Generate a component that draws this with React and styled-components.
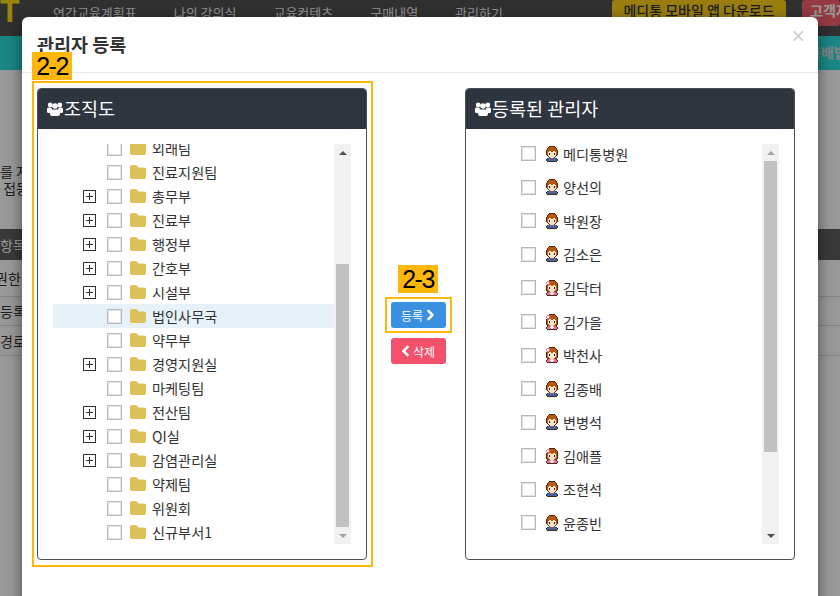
import React from 'react'
import styled, { createGlobalStyle } from 'styled-components'
import { FaChevronLeft, FaChevronRight } from 'react-icons/fa'

const GlobalStyle = createGlobalStyle`
    html, body {
        margin: 0;
        padding: 0;
        height: 596px;
        overflow: hidden;
        background: #fff;
        font-family: "Noto Sans CJK KR", "Noto Sans", sans-serif;
    }
    * { box-sizing: border-box; }
`

const Page = styled.div`
    position: relative;
    width: 840px;
    height: 596px;
    overflow: hidden;
`

/* page behind the modal */
const Nav = styled.div`
    display: flex;
    align-items: flex-start;
    height: 36px;
    background: #505050;
`
const Logo = styled.div`
    width: 53px;
    margin-top: -7px;
    font: bold 32px "Liberation Sans", sans-serif;
    color: #ffdc1e;
`
const NavItems = styled.div`
    display: flex;
    width: 559px;
`
const NavItem = styled.div`
    margin-right: 37px;
    padding-top: 3px;
    font-size: 13px;
    color: #eee;
`
const AppButton = styled.div`
    width: 174px;
    height: 24px;
    border-radius: 3px;
    text-align: center;
    font-size: 14px;
    font-weight: 500;
    color: #333;
    background: #ffd21a;
`
const HelpButton = styled.div`
    width: 38px;
    height: 26px;
    margin-left: 16px;
    padding-left: 8px;
    border-radius: 3px;
    white-space: nowrap;
    font-size: 14px;
    font-weight: 700;
    color: #fff;
    background: #f8626f;
`
const Band = styled.div`
    height: 34px;
    padding: 6px 0 0 808px;
    white-space: nowrap;
    font-size: 14px;
    font-weight: 700;
    color: #ddd;
    background: #2be0dc;
`
const Intro = styled.div`
    height: 159px;
    padding-top: 93px;
    font-size: 14px;
    line-height: 17px;
    color: #333;
`
const TableHead = styled.div`
    display: flex;
    align-items: center;
    height: 31px;
    font-size: 14px;
    color: #fff;
    background: #606060;
`
const TableRow = styled.div`
    display: flex;
    align-items: center;
    height: ${p => p.$h}px;
    margin-left: ${p => p.$shift || 0}px;
    border-bottom: 1px solid #ddd;
    font-size: 14px;
    color: #333;
`

const Backdrop = styled.div`
    position: absolute;
    inset: 0;
    background: rgba(0, 0, 0, 0.4);
`

/* modal */
const Modal = styled.div`
    position: absolute;
    top: 17px;
    left: 22px;
    width: 796px;
    height: 640px;
    border-radius: 6px;
    background: #fff;
    box-shadow: 0 5px 15px rgba(0, 0, 0, 0.5);
`
const ModalHeader = styled.div`
    display: flex;
    justify-content: space-between;
    height: 56px;
    padding: 14px 13px 0 15px;
    border-bottom: 1px solid #e9e9e9;
`
const ModalTitle = styled.h4`
    margin: 0;
    font-size: 18.5px;
    line-height: 26px;
    font-weight: 700;
    color: #333;
`
const Close = styled.span`
    margin-top: -8px;
    font: 23px/26px "Liberation Sans", sans-serif;
    color: #cfcfcf;
`
const ModalBody = styled.div`
    display: flex;
    padding: 8px 23px 0 10px;
`

const Annotated = styled.div`
    position: relative;
    border: 2px solid #ffb70a;
`
const Tag = styled.div`
    width: 40px;
    height: 28px;
    text-align: center;
    font: 25px/28px "Liberation Sans", sans-serif;
    letter-spacing: -1.5px;
    color: #000;
    background: #ffb70a;
`
const FloatingTag = styled(Tag)`
    position: absolute;
    top: -31px;
    left: -2px;
`
const TreeFrame = styled(Annotated)`
    width: 341px;
    padding: 5px 4px 5px 3px;
`
const Panel = styled.section`
    width: 330px;
    height: 472px;
    border: 1px solid #4b5057;
    border-radius: 4px;
    overflow: hidden;
`
const PanelHead = styled.header`
    display: flex;
    align-items: center;
    height: 40px;
    padding: 0 0 2px 9px;
    font-size: 18.5px;
    color: #fff;
    background: #2f353f;
`
const PanelBody = styled.div`
    display: flex;
    height: 400px;
    margin: 15px 15px 0 15px;
`
const Viewport = styled.div`
    flex: 1;
    overflow: hidden;
`
const TreeList = styled.ul`
    margin: -8px 0 0;
    padding: 0;
    list-style: none;
`
const TreeRow = styled.li`
    display: flex;
    align-items: center;
    height: 24px;
    padding-left: 30px;
    font-size: 14.2px;
    color: #333;
    background: ${p => (p.$active ? '#e6f2f8' : 'transparent')};
`
const Expander = styled.span`
    position: relative;
    flex: none;
    width: 13px;
    height: 13px;
    margin-right: 11px;
    border: 1px solid #333;
    visibility: ${p => (p.$show ? 'visible' : 'hidden')};
    &::before {
        content: '';
        position: absolute;
        left: 2px;
        top: 5px;
        width: 7px;
        height: 1px;
        background: #333;
    }
    &::after {
        content: '';
        position: absolute;
        left: 5px;
        top: 2px;
        width: 1px;
        height: 7px;
        background: #333;
    }
`
const Check = styled.span`
    flex: none;
    width: 15px;
    height: 15px;
    border: 1px solid #b8b8b8;
    box-shadow: inset 0 0 0 1px #e4e4e4;
    background: #fff;
`
const FolderSvg = styled.svg`
    flex: none;
    width: 16px;
    height: 14px;
    margin: 0 6px 0 8px;
    fill: #dcc059;
`
const PeopleSvg = styled.svg`
    flex: none;
    width: 16px;
    height: 14px;
    margin: 1px 1px 0 0;
    fill: #fff;
`

const Bar = styled.div`
    display: flex;
    flex-direction: column;
    flex: none;
    width: 17px;
    height: 400px;
    background: #f1f1f1;
`
const ArrowCell = styled.div`
    display: flex;
    flex: none;
    align-items: center;
    justify-content: center;
    height: 17px;
`
const Arrow = styled.span`
    width: 0;
    height: 0;
    border-left: 4px solid transparent;
    border-right: 4px solid transparent;
    ${p => (p.$down
        ? `border-top: 4px solid ${p.$dark ? '#505050' : '#a3a3a3'};`
        : `border-bottom: 4px solid ${p.$dark ? '#505050' : '#a3a3a3'};`)}
`
const Track = styled.div`
    flex: 1;
    padding: 0 2px;
`
const Thumb = styled.div`
    background: #c1c1c1;
`

const Middle = styled.div`
    display: flex;
    flex-direction: column;
    align-items: center;
    flex: none;
    width: 90px;
    margin-right: 2px;
    padding-top: 184px;
`
const ButtonFrame = styled(Annotated)`
    margin-top: 4px;
    padding: 3px 4px;
`
const ActionButton = styled.button`
    display: flex;
    align-items: center;
    justify-content: center;
    gap: 3px;
    width: 55px;
    height: 26px;
    padding: 0;
    border: none;
    border-radius: 3px;
    font-family: inherit;
    font-size: 12px;
    color: #fff;
    background: ${p => p.$bg};
    svg {
        width: 9px;
        height: 12px;
        stroke: currentColor;
        stroke-width: 40px;
    }
`
const DeleteButton = styled(ActionButton)`
    margin-top: 5px;
`

const RightPanel = styled(Panel)`
    flex: none;
    margin-top: 7px;
`
const UserList = styled.ul`
    margin: -7px 0 0;
    padding: 0 0 0 40px;
    list-style: none;
`
const UserRow = styled.li`
    display: flex;
    align-items: center;
    height: 33.55px;
    font-size: 14.2px;
    color: #333;
`
const Avatar = styled.svg`
    flex: none;
    width: 12px;
    height: 16px;
    margin: 0 5px 0 10px;
    shape-rendering: crispEdges;
`

const Teams = [
    ['외래팀', false], ['진료지원팀', false], ['총무부', true], ['진료부', true], ['행정부', true],
    ['간호부', true], ['시설부', true], ['법인사무국', false], ['약무부', false], ['경영지원실', true],
    ['마케팅팀', false], ['전산팀', true], ['QI실', true], ['감염관리실', true], ['약제팀', false],
    ['위원회', false], ['신규부서1', false],
]

const Admins = [
    ['메디통병원', 'm'], ['양선의', 'm'], ['박원장', 'm'], ['김소은', 'm'], ['김닥터', 'f'], ['김가을', 'f'],
    ['박천사', 'f'], ['김종배', 'm'], ['변병석', 'm'], ['김애플', 'f'], ['조현석', 'm'], ['윤종빈', 'm'],
]

const PixelColors = {
    k: '#4a2a12', h: '#b9560f', s: '#fde3c6', e: '#33211a', b: '#2f6cb3', r: '#d8382c',
    p: '#ef6f9a', w: '#fff',
}

const Sprites = {
    m: [
        '...kkkkkk...',
        '..khhhhhhk..',
        '.khhhhhhhhk.',
        '.khhhhhhhhk.',
        'khhhhhhhhhhk',
        'khhsshhsshhk',
        'khssssssssHk',
        'khsesssseshk',
        'khsesssseshk',
        '.kssssssssk.',
        '..kssssssk..',
        '...kssssk...',
        '.kbbbrrbbbk.',
        'kbbbbrrbbbbk',
        'kbbbbbbbbbbk',
        '.kkkkkkkkkk.',
    ],
    f: [
        '...kkkkkk...',
        '.pphhhhhhk..',
        'pwwphhhhhhk.',
        'pwwphhhhhhhk',
        '.pphhhhhhhhk',
        'khhsshhsshhk',
        'khssssssssHk',
        'khsesssseshk',
        'khsesssseshk',
        'khssssssssHk',
        'khhssssssHHk',
        '.kkhssssHkk.',
        '.kpppsspppk.',
        'kpppwwwwpppk',
        'kppppwwppppk',
        '.kkkkkkkkkk.',
    ],
}

const Person = ({ kind }) => (
    <Avatar viewBox="0 0 12 16">
        {Sprites[kind].map((line, y) =>
            line.split('').map((c, x) => {
                const fill = PixelColors[c.toLowerCase()]
                return fill ? <rect key={x + '-' + y} x={x} y={y} width="1" height="1" fill={fill} /> : null
            })
        )}
    </Avatar>
)

const Folder = () => (
    <FolderSvg viewBox="0 0 16 14">
        <path d="M2 0h4.5l2 2.5H14a2 2 0 0 1 2 2V12a2 2 0 0 1-2 2H2a2 2 0 0 1-2-2V2a2 2 0 0 1 2-2z" />
    </FolderSvg>
)

const People = () => (
    <PeopleSvg viewBox="0 0 16 14">
        <circle cx="3.2" cy="3" r="2.4" />
        <circle cx="12.8" cy="3" r="2.4" />
        <circle cx="8" cy="4" r="2.8" />
        <rect x="0" y="5.5" width="5" height="5.5" rx="1.5" />
        <rect x="11" y="5.5" width="5" height="5.5" rx="1.5" />
        <rect x="3" y="7.5" width="10" height="6.5" rx="2" />
    </PeopleSvg>
)

const ScrollBar = ({ top, height, bottomDark }) => (
    <Bar>
        <ArrowCell><Arrow $dark={!bottomDark} /></ArrowCell>
        <Track>
            <Thumb style={{ marginTop: top, height }} />
        </Track>
        <ArrowCell><Arrow $down $dark={bottomDark} /></ArrowCell>
    </Bar>
)

export default function App() {
    return (
        <Page>
            <GlobalStyle />
            <Nav>
                <Logo>T</Logo>
                <NavItems>
                    <NavItem>연간교육계획표</NavItem>
                    <NavItem>나의 강의실</NavItem>
                    <NavItem>교육컨텐츠</NavItem>
                    <NavItem>구매내역</NavItem>
                    <NavItem>관리하기</NavItem>
                </NavItems>
                <AppButton>메디통 모바일 앱 다운로드</AppButton>
                <HelpButton>고객지원</HelpButton>
            </Nav>
            <Band>충배법</Band>
            <Intro>를 지<br />&nbsp;접등</Intro>
            <TableHead>항목</TableHead>
            <TableRow $h={37} $shift={-5}>권한</TableRow>
            <TableRow $h={29}>등록</TableRow>
            <TableRow $h={30}>경로</TableRow>
            <Backdrop />

            <Modal>
                <ModalHeader>
                    <ModalTitle>관리자 등록</ModalTitle>
                    <Close>×</Close>
                </ModalHeader>
                <ModalBody>
                    <TreeFrame>
                        <FloatingTag>2-2</FloatingTag>
                        <Panel>
                            <PanelHead><People />조직도</PanelHead>
                            <PanelBody>
                                <Viewport>
                                    <TreeList>
                                        {Teams.map(([name, branch]) => (
                                            <TreeRow key={name} $active={name === '법인사무국'}>
                                                <Expander $show={branch} />
                                                <Check />
                                                <Folder />
                                                {name}
                                            </TreeRow>
                                        ))}
                                    </TreeList>
                                </Viewport>
                                <ScrollBar top={103} height={263} />
                            </PanelBody>
                        </Panel>
                    </TreeFrame>
                    <Middle>
                        <Tag>2-3</Tag>
                        <ButtonFrame>
                            <ActionButton $bg="#3a8fe0">등록<FaChevronRight /></ActionButton>
                        </ButtonFrame>
                        <DeleteButton $bg="#f4516c"><FaChevronLeft />삭제</DeleteButton>
                    </Middle>
                    <RightPanel>
                        <PanelHead><People />등록된 관리자</PanelHead>
                        <PanelBody>
                            <Viewport>
                                <UserList>
                                    {Admins.map(([name, kind]) => (
                                        <UserRow key={name}>
                                            <Check />
                                            <Person kind={kind} />
                                            {name}
                                        </UserRow>
                                    ))}
                                </UserList>
                            </Viewport>
                            <ScrollBar top={0} height={291} bottomDark />
                        </PanelBody>
                    </RightPanel>
                </ModalBody>
            </Modal>
        </Page>
    )
}
